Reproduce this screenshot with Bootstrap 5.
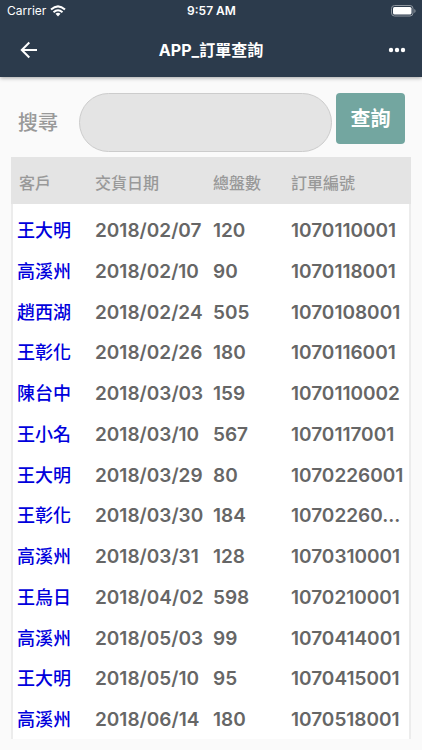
<!DOCTYPE html>
<html lang="zh-Hant">
<head>
<meta charset="utf-8">
<meta name="viewport" content="width=device-width, initial-scale=1">
<title>APP_訂單查詢</title>
<link href="https://cdn.jsdelivr.net/npm/bootstrap@5.3.0/dist/css/bootstrap.min.css" rel="stylesheet">
<style>
body { font-family: Inter, "Noto Sans CJK TC", sans-serif; background: #fafafa; color: #666; }
.app-header { background: #2c3b4c; color: #fff; box-shadow: 0 1px 4px rgba(0,0,0,.35); }
.status { display: grid; grid-template-columns: 1fr auto 1fr; height: 22px; font-size: 12px; padding: 0 6px 0 7px; }
.titlebar { display: grid; grid-template-columns: 1fr auto 1fr; height: 55px; padding: 0 16px; }
.titlebar h1 { font-size: 16px; line-height: 24px; font-weight: 700; }
.icon-btn { color: #fff; line-height: 0; }
.search { padding: 16px 17px 5px 18px; }
.search label { font-size: 20px; line-height: 30px; font-weight: 500; color: #999; width: 61px; margin-top: 15px; }
.search .form-control { height: 59px; min-width: 0; background: #e4e4e4; border-color: #ccc; font-size: 20px; }
.search .btn { width: 69px; height: 51px; margin-left: 4px; padding: 0; border-radius: 4px; background: #73a6a0; color: #fff; font-size: 20px; font-weight: 700; }
.orders { margin: 0 11px 10px; }
.orders-table { table-layout: fixed; width: 100%; border-collapse: separate; border-spacing: 0; }
.orders-table th, .orders-table td { padding: 0 0 0 6px; white-space: nowrap; }
.orders-table thead th { height: 47px; padding-top: 5px; background: #e4e4e4; font-size: 16px; font-weight: 500; color: #999; }
.orders-table thead th:first-child { padding-left: 8px; }
.orders-table tbody tr { height: 41px; }
.orders-table tbody tr:nth-child(4n) { height: 40px; }
.orders-table tbody td { padding-top: 2px; background: #fff; font-size: 19px; line-height: 28px; font-weight: 600; }
.orders-table tbody tr:first-child { height: 46px; }
.orders-table tbody tr:first-child td { padding-top: 7px; }
.orders-table tbody td:first-child { border-left: 2px solid #ececec; padding-left: 4px; font-size: 18px; }
.orders-table tbody td:last-child { border-right: 2px solid #ececec; }
.orders-table a { color: #0000dc; font-weight: 500; }
.c-name, .c-count { width: 19.5%; }
.c-date { width: 29.5%; }
</style>
<script src="https://cdn.jsdelivr.net/npm/bootstrap@5.3.0/dist/js/bootstrap.bundle.min.js"></script>
</head>
<body>
<header class="app-header position-relative">
  <div class="status align-items-center">
    <div class="d-flex align-items-center gap-1">
      <span>Carrier</span>
      <svg width="16" height="12" viewBox="0 0 16 12" fill="none" stroke="#fff" stroke-width="2" aria-hidden="true"><path d="M1 4.6Q8-1.8 15 4.6M3.5 7.2Q8 3.2 12.5 7.2"/><path d="M5.5 8.8Q8 6.8 10.5 8.8L8 11.4Z" fill="#fff" stroke="none"/></svg>
    </div>
    <span class="fw-semibold">9:57 AM</span>
    <svg class="ms-auto" width="25" height="12" viewBox="0 0 25 12" aria-hidden="true"><rect x=".5" y=".5" width="21.5" height="10.5" rx="3" fill="none" stroke="#8d959e"/><rect x="2" y="2" width="18.5" height="7.5" rx="1.5" fill="#fff"/><path d="M23.3 4v4q1.3-.6 1.3-2t-1.3-2z" fill="#8d959e"/></svg>
  </div>
  <div class="titlebar align-items-center">
    <button class="icon-btn btn py-0 px-1 border-0 me-auto" type="button" aria-label="返回"><svg width="18" height="18" viewBox="0 0 18 18" fill="none" stroke="#fff" stroke-width="2"><path d="M17 9H2.5M9.3 1.5 1.8 9l7.5 7.5"/></svg></button>
    <h1 class="m-0">APP_訂單查詢</h1>
    <button class="icon-btn btn p-0 border-0 ms-auto" type="button" aria-label="更多"><svg width="18" height="6" viewBox="0 0 18 6" fill="#fff"><circle cx="3" cy="3" r="2.2"/><circle cx="9" cy="3" r="2.2"/><circle cx="15" cy="3" r="2.2"/></svg></button>
  </div>
</header>
<main>
  <form class="search d-flex align-items-start">
    <label for="q" class="flex-shrink-0">搜尋</label>
    <input id="q" type="text" class="form-control rounded-pill flex-grow-1">
    <button type="button" class="btn flex-shrink-0">查詢</button>
  </form>
  <div class="orders">
    <table class="orders-table">
      <thead><tr><th class="c-name">客戶</th><th class="c-date">交貨日期</th><th class="c-count">總盤數</th><th>訂單編號</th></tr></thead>
      <tbody>
        <tr><td><a class="text-decoration-none" href="#">王大明</a></td><td>2018/02/07</td><td>120</td><td>1070110001</td></tr>
        <tr><td><a class="text-decoration-none" href="#">高溪州</a></td><td>2018/02/10</td><td>90</td><td>1070118001</td></tr>
        <tr><td><a class="text-decoration-none" href="#">趙西湖</a></td><td>2018/02/24</td><td>505</td><td>1070108001</td></tr>
        <tr><td><a class="text-decoration-none" href="#">王彰化</a></td><td>2018/02/26</td><td>180</td><td>1070116001</td></tr>
        <tr><td><a class="text-decoration-none" href="#">陳台中</a></td><td>2018/03/03</td><td>159</td><td>1070110002</td></tr>
        <tr><td><a class="text-decoration-none" href="#">王小名</a></td><td>2018/03/10</td><td>567</td><td>1070117001</td></tr>
        <tr><td><a class="text-decoration-none" href="#">王大明</a></td><td>2018/03/29</td><td>80</td><td>1070226001</td></tr>
        <tr><td><a class="text-decoration-none" href="#">王彰化</a></td><td>2018/03/30</td><td>184</td><td>10702260...</td></tr>
        <tr><td><a class="text-decoration-none" href="#">高溪州</a></td><td>2018/03/31</td><td>128</td><td>1070310001</td></tr>
        <tr><td><a class="text-decoration-none" href="#">王烏日</a></td><td>2018/04/02</td><td>598</td><td>1070210001</td></tr>
        <tr><td><a class="text-decoration-none" href="#">高溪州</a></td><td>2018/05/03</td><td>99</td><td>1070414001</td></tr>
        <tr><td><a class="text-decoration-none" href="#">王大明</a></td><td>2018/05/10</td><td>95</td><td>1070415001</td></tr>
        <tr><td><a class="text-decoration-none" href="#">高溪州</a></td><td>2018/06/14</td><td>180</td><td>1070518001</td></tr>
      </tbody>
    </table>
  </div>
</main>
</body>
</html>
